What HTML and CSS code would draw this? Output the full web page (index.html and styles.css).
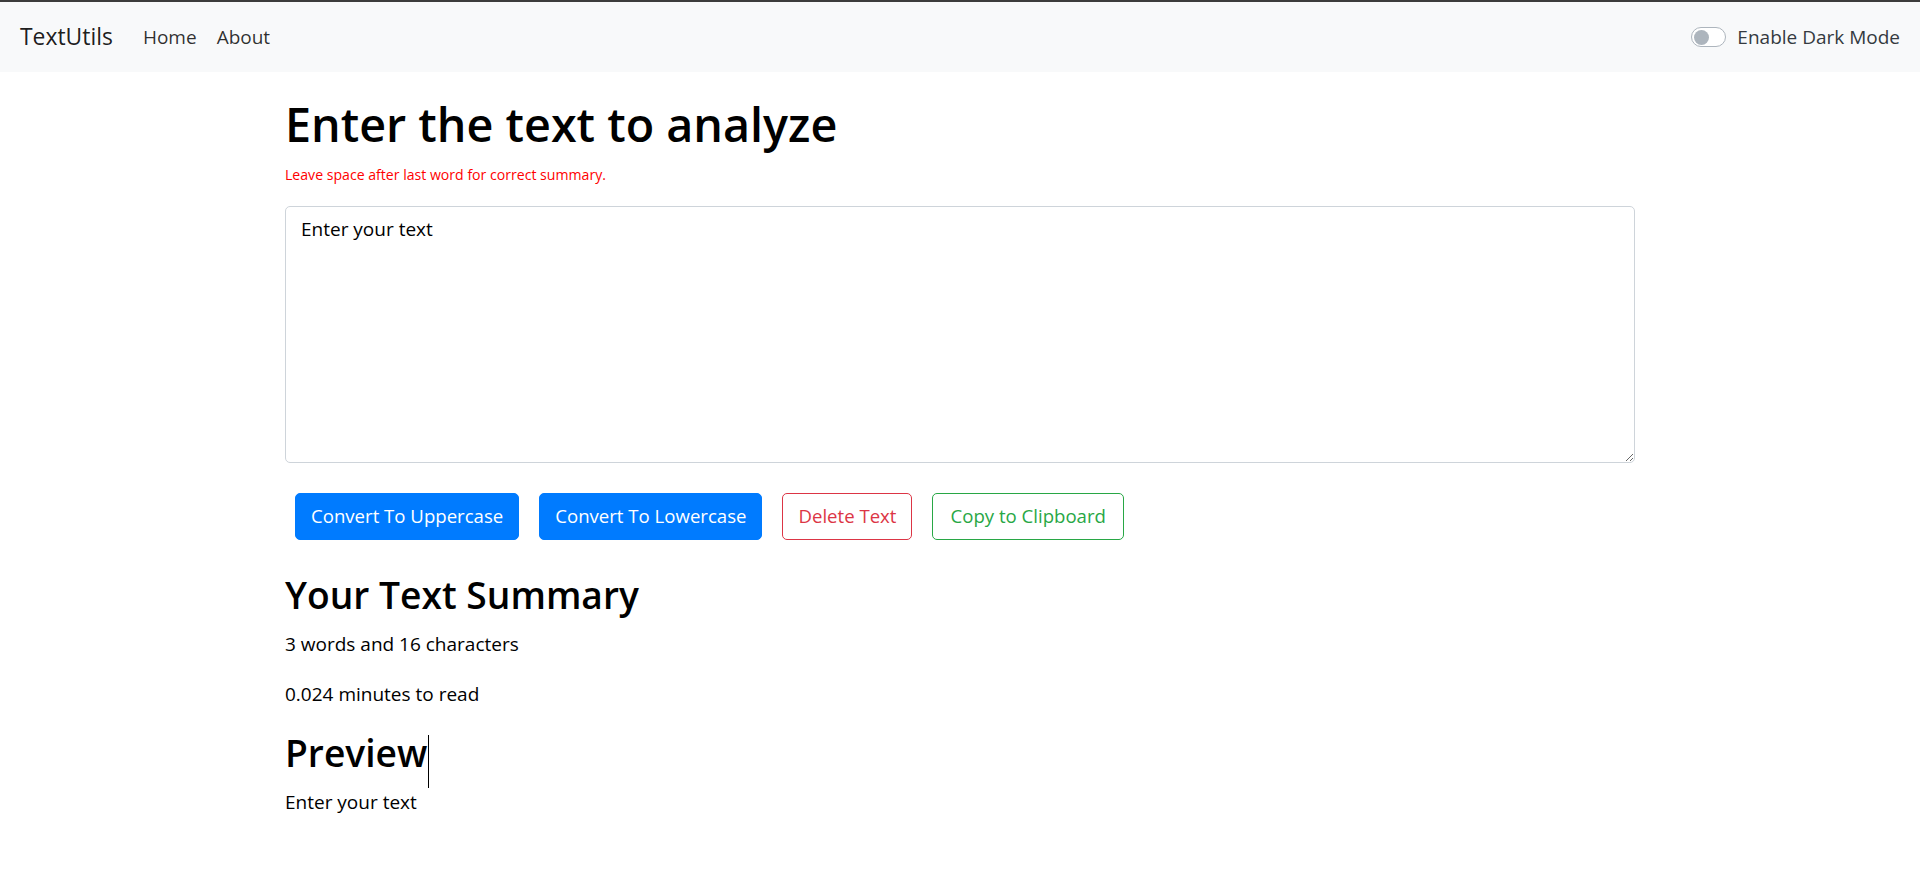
FILE: index.html
```html
<!DOCTYPE html>
<html lang="en">
<head>
<meta charset="utf-8">
<title>TextUtils</title>
<link rel="stylesheet" href="styles.css">
</head>
<body>
<div class="topline"></div>
<nav class="navbar">
  <a class="brand" href="#">TextUtils</a>
  <ul class="nav">
    <li><a class="nav-link" href="#">Home</a></li>
    <li><a class="nav-link" href="#">About</a></li>
  </ul>
  <label class="switch">
    <span class="track"><span class="knob"></span></span>
    <span class="switch-label">Enable Dark Mode</span>
  </label>
</nav>
<main class="container form-area">
  <h1 class="title">Enter the text to analyze</h1>
  <p class="note">Leave space after last word for correct summary.</p>
  <div class="field"><textarea class="textbox" rows="8">Enter your text </textarea></div>
  <div class="actions"><button class="btn btn-primary">Convert To Uppercase</button><button class="btn btn-primary">Convert To Lowercase</button><button class="btn btn-outline-danger">Delete Text</button><button class="btn btn-outline-success">Copy to Clipboard</button></div>
</main>
<section class="container summary">
  <h2 class="sub">Your Text Summary</h2>
  <p class="para">3 words and 16 characters</p>
  <p class="para">0.024 minutes to read</p>
  <h2 class="sub">Preview<span class="caret"></span></h2>
  <p class="para">Enter your text</p>
</section>
</body>
</html>
```

FILE: styles.css
```css
* { box-sizing: border-box; }
html, body { margin: 0; }
body {
  font-family: "Open Sans", "Noto Sans", sans-serif;
  font-size: 19px;
  line-height: 30px;
  color: #000;
  background: #fff;
}
.topline { height: 2px; background: #3c3c3c; }
.navbar {
  display: flex;
  align-items: center;
  height: 70px;
  padding: 0 20px;
  background: #f8f9fa;
}
.brand {
  font-size: 22.9px;
  line-height: 37.5px;
  color: rgba(0, 0, 0, .9);
  text-decoration: none;
  margin-right: 20px;
}
.nav { display: flex; list-style: none; margin: 0; padding: 0; flex: 1; }
.nav-link {
  display: block;
  padding: 10px;
  color: rgba(0, 0, 0, .82);
  text-decoration: none;
  font-size: 19px;
  line-height: 30px;
}
.switch { display: flex; align-items: center; gap: 11px; }
.track {
  width: 35px;
  height: 20px;
  border: 1px solid #adb5bd;
  border-radius: 10px;
  background: #fff;
  display: flex;
  align-items: center;
  padding-left: 2px;
}
.knob { width: 15px; height: 15px; border-radius: 50%; background: #adb5bd; }
.switch-label { color: #343a40; font-size: 19px; line-height: 30px; }
.container { width: 1350px; margin: 0 auto; }
.form-area { margin-top: 22px; }
.title { font-size: 46.7px; font-weight: 600; line-height: 60px; margin: 0 0 10px; }
.note { color: #ff0000; font-size: 14.1px; line-height: 22.5px; margin: 0 0 19px; }
.field { margin-bottom: 20px; }
.textbox {
  display: block;
  width: 100%;
  height: 257px;
  padding: 7.5px 15px;
  font-family: inherit;
  font-size: 19px;
  line-height: 30px;
  color: #000;
  background: #fff;
  border: 1px solid #ced4da;
  border-radius: 5px;
  margin: 0;
}
.actions { display: flex; }
.btn {
  margin: 10px;
  padding: 7.5px 15px;
  font-family: inherit;
  font-size: 18.6px;
  line-height: 30px;
  border: 1px solid transparent;
  border-radius: 5px;
  background: #fff;
}
.btn-primary { background: #007bff; border-color: #007bff; color: #fff; }
.btn-outline-danger { color: #dc3545; border-color: #dc3545; }
.btn-outline-success { color: #28a745; border-color: #28a745; padding: 7.5px 17px; }
.summary { margin-top: 21px; }
.sub { font-size: 37.2px; font-weight: 600; line-height: 48px; margin: 0 0 10px; }
.para { margin: 0 0 20px; }
.caret {
  display: inline-block;
  width: 1px;
  height: 53px;
  margin: -12px 0 -12px 1px;
  background: #000;
  vertical-align: -9px;
}
```
